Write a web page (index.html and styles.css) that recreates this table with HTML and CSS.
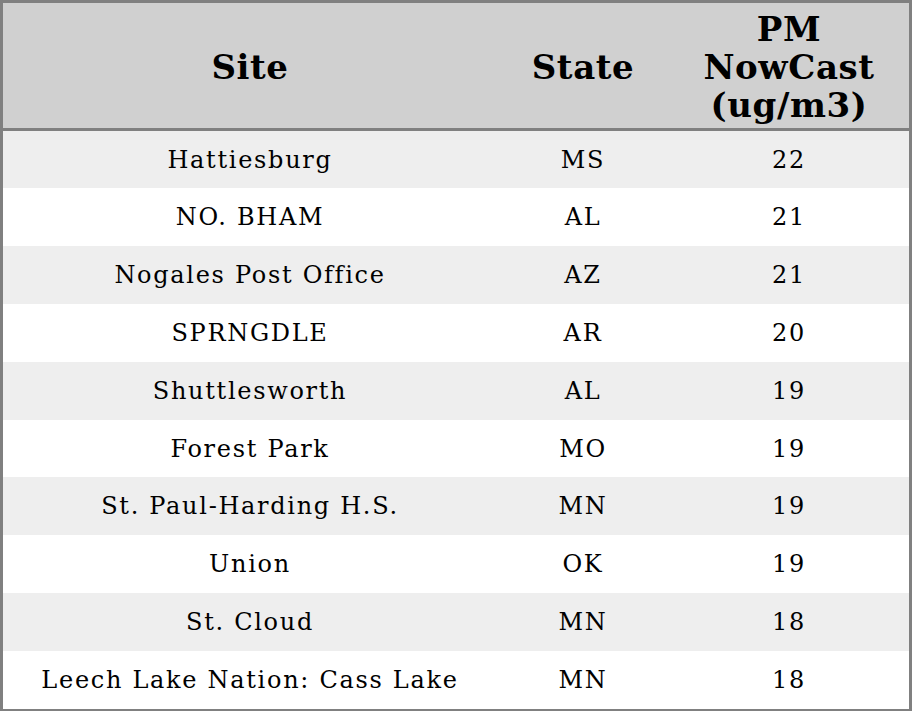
FILE: index.html
```html
<!DOCTYPE html>
<html>
<head>
<meta charset="utf-8">
<link rel="stylesheet" href="styles.css">
</head>
<body>
<table class="aq">
  <colgroup>
    <col class="c-site">
    <col class="c-state">
    <col class="c-pm">
  </colgroup>
  <thead>
    <tr><th>Site</th><th>State</th><th>PM<br>NowCast<br>(ug/m3)</th></tr>
  </thead>
  <tbody>
    <tr><td>Hattiesburg</td><td>MS</td><td>22</td></tr>
    <tr><td>NO. BHAM</td><td>AL</td><td>21</td></tr>
    <tr><td>Nogales Post Office</td><td>AZ</td><td>21</td></tr>
    <tr><td>SPRNGDLE</td><td>AR</td><td>20</td></tr>
    <tr><td>Shuttlesworth</td><td>AL</td><td>19</td></tr>
    <tr><td>Forest Park</td><td>MO</td><td>19</td></tr>
    <tr><td>St. Paul-Harding H.S.</td><td>MN</td><td>19</td></tr>
    <tr><td>Union</td><td>OK</td><td>19</td></tr>
    <tr><td>St. Cloud</td><td>MN</td><td>18</td></tr>
    <tr><td>Leech Lake Nation: Cass Lake</td><td>MN</td><td>18</td></tr>
  </tbody>
</table>
</body>
</html>
```
FILE: styles.css
```css
html, body {
  margin: 0;
  padding: 0;
  background: #ffffff;
}
.aq {
  width: 912px;
  height: 711px;
  border-collapse: separate;
  border-spacing: 0;
  border: 3px solid #808080;
  box-sizing: border-box;
  table-layout: fixed;
  font-family: "DejaVu Serif", serif;
  color: #000;
}
.c-site { width: 494px; }
.c-state { width: 172px; }
.c-pm { width: 240px; }
.aq th {
  background: #d0d0d0;
  font-weight: bold;
  font-size: 34px;
  line-height: 38px;
  letter-spacing: 0.6px;
  height: 128px;
  padding: 3px 0 0 0;
  text-align: center;
  vertical-align: middle;
  border-bottom: 3px solid #808080;
  box-sizing: border-box;
}
.aq td {
  font-size: 24px;
  letter-spacing: 1.7px;
  padding: 0;
  text-align: center;
  vertical-align: middle;
  height: 57.9px;
}
.aq tbody tr:first-child td {
  height: 56px;
  padding-top: 1px;
}
.aq tbody tr:nth-child(odd) td {
  background: #eeeeee;
}
```
